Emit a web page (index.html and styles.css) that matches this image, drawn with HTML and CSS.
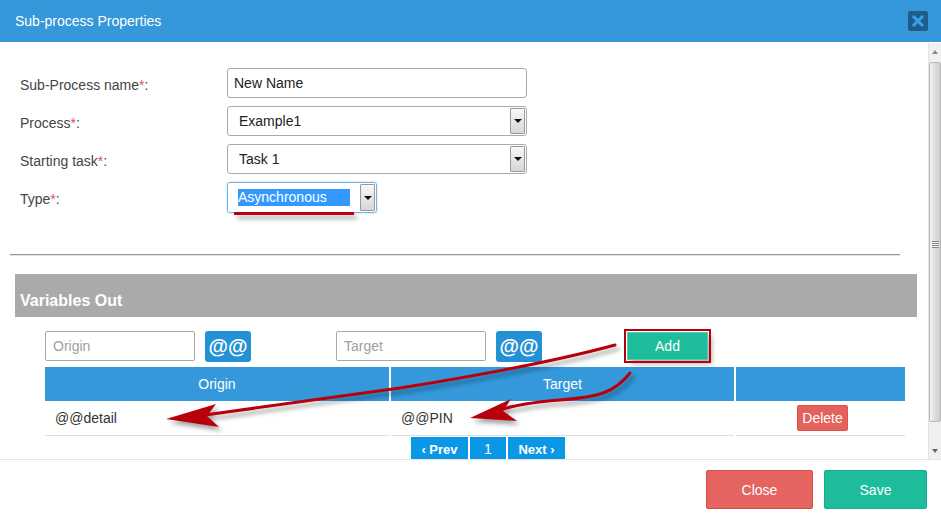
FILE: index.html
```html
<!DOCTYPE html>
<html lang="en">

<head>
    <meta charset="UTF-8">
    <title>Sub-process Properties</title>
    <link rel="stylesheet" href="styles.css">
</head>

<body>

    <div class="modal">
        <div class="modal-header">
            <h4>Sub-process Properties</h4>
            <button class="btn-x" type="button">
                <svg width="20" height="20" viewBox="0 0 20 20">
                    <path d="M6 6 L14 14 M14 6 L6 14" stroke="#3f9fe4" stroke-width="3" stroke-linecap="square" />
                </svg>
            </button>
        </div>

        <div class="modal-main">
            <div class="modal-body">
                <div class="props">
                    <label>Sub-Process name<span class="req">*</span>:</label>
                    <input class="field" type="text" value="New Name">

                    <label>Process<span class="req">*</span>:</label>
                    <div class="select">
                        <span>Example1</span>
                        <span class="select-btn"></span>
                    </div>

                    <label>Starting task<span class="req">*</span>:</label>
                    <div class="select">
                        <span>Task 1</span>
                        <span class="select-btn"></span>
                    </div>

                    <label>Type<span class="req">*</span>:</label>
                    <div class="select select-small focused">
                        <span class="selected">Asynchronous</span>
                        <span class="select-btn"></span>
                    </div>
                </div>

                <hr>

                <div class="panel-title">Variables Out</div>

                <div class="vars">
                    <div class="var-inputs">
                        <input class="field field-small" type="text" placeholder="Origin">
                        <button class="btn-at" type="button">@@</button>
                        <input class="field field-small target" type="text" placeholder="Target">
                        <button class="btn-at" type="button">@@</button>
                        <button class="btn-add" type="button">Add</button>
                    </div>

                    <table class="var-table">
                        <thead>
                            <tr>
                                <th class="col-origin">Origin</th>
                                <th class="col-target">Target</th>
                                <th class="col-action"></th>
                            </tr>
                        </thead>
                        <tbody>
                            <tr>
                                <td>@@detail</td>
                                <td>@@PIN</td>
                                <td class="cell-action"><button class="btn-delete" type="button">Delete</button></td>
                            </tr>
                        </tbody>
                    </table>

                    <div class="pager">
                        <a href="#">&lsaquo; Prev</a>
                        <a href="#" class="page-num">1</a>
                        <a href="#">Next &rsaquo;</a>
                    </div>
                </div>
            </div>

            <!-- fake scrollbar of the old browser -->
            <div class="scrollbar">
                <div class="sb-up"></div>
                <div class="sb-thumb"><span class="sb-grip"></span></div>
                <div class="sb-track"></div>
                <div class="sb-down"></div>
            </div>
        </div>

        <div class="modal-footer">
            <button class="btn btn-close" type="button">Close</button>
            <button class="btn btn-save" type="button">Save</button>
        </div>

        <!-- red hand-drawn annotations -->
        <svg class="annot" width="941" height="519" viewBox="0 0 941 519">
            <rect x="234" y="212" width="120" height="3" fill="#c00008" />
            <path d="M615 345 C560 360 500 372 400 388 C330 398 260 408 205 415" fill="none" stroke="#b8000a" stroke-width="3" stroke-linecap="round" />
            <polygon points="166,419 216,404 207,416 219,427" fill="#b8000a" />
            <path d="M630 373 C615 392 600 397 560 400 C535 402 515 405 500 410" fill="none" stroke="#b8000a" stroke-width="3" stroke-linecap="round" />
            <polygon points="470,418 511,399 503,411 517,421" fill="#b8000a" />
        </svg>
    </div>

</body>

</html>
```

FILE: styles.css
```css
* {
    margin: 0;
    padding: 0;
    box-sizing: border-box;
}

body {
    width: 941px;
    height: 519px;
    overflow: hidden;
    background-color: #fff;
    font-family: "Liberation Sans", Arial, sans-serif;
    font-size: 14px;
    color: #333;
}

.modal {
    position: relative;
    height: 519px;
    display: flex;
    flex-direction: column;
}

/* Header */
.modal-header {
    height: 42px;
    background-color: #3498db;
    display: flex;
    align-items: center;
    justify-content: space-between;
    padding: 0 13px 0 15px;
}

.modal-header h4 {
    font-size: 14px;
    font-weight: normal;
    color: #fff;
}

.btn-x {
    width: 20px;
    height: 20px;
    border: none;
    border-radius: 2px;
    background-color: #1d5c8b;
    display: flex;
}

/* Body with scrollbar */
.modal-main {
    display: flex;
    height: 416px;
    margin-top: 1px;
}

.modal-body {
    flex: 1;
    overflow: hidden;
    padding-top: 25px;
}

.props {
    display: grid;
    grid-template-columns: 207px 300px;
    grid-template-rows: 30px 30px 30px 31px;
    row-gap: 8px;
    align-items: center;
    padding-left: 20px;
}

.props label {
    padding-top: 3px;
    font-size: 14px;
    color: #444;
}

.req {
    color: #e0504a;
}

.field {
    height: 30px;
    border: 1px solid #aaa;
    border-radius: 3px;
    padding: 0 6px;
    font-family: inherit;
    font-size: 14px;
    color: #222;
    outline: none;
}

.field::placeholder {
    color: #a0a0a0;
}

.select {
    position: relative;
    height: 30px;
    border: 1px solid #aaa;
    border-radius: 3px;
    display: flex;
    align-items: center;
    padding-left: 11px;
    color: #222;
}

.select-btn {
    position: absolute;
    top: 1px;
    right: 1px;
    bottom: 1px;
    width: 15px;
    border: 1px solid #999;
    border-radius: 1px;
    background: linear-gradient(#f8f8f8, #d6d6d6);
}

.select-btn::after {
    content: "";
    position: absolute;
    left: 3px;
    top: 50%;
    margin-top: -2px;
    border-left: 4px solid transparent;
    border-right: 4px solid transparent;
    border-top: 4px solid #111;
}

.select-small {
    width: 150px;
    height: 31px;
    padding-left: 10px;
}

.focused {
    border-color: #7fb3e8;
    box-shadow: 0 0 2px rgba(80, 150, 230, 0.6);
}

.selected {
    background-color: #3399ff;
    color: #fff;
    width: 112px;
    line-height: 17px;
}

hr {
    margin: 41px 28px 0 10px;
    border: none;
    border-top: 1px solid #999;
    border-bottom: 1px solid #e2e2e2;
}

.panel-title {
    margin: 18px 11px 0 15px;
    height: 43px;
    background-color: #aaa;
    color: #fff;
    font-size: 16px;
    font-weight: bold;
    display: flex;
    align-items: center;
    padding: 10px 0 0 5px;
}

/* Variables out */
.vars {
    margin: 14px 23px 0 45px;
}

.var-inputs {
    display: flex;
    align-items: flex-start;
}

.field-small {
    width: 150px;
    padding-left: 7px;
    border-radius: 2px;
}

.btn-at {
    width: 46px;
    height: 31px;
    margin-left: 10px;
    border: none;
    border-radius: 3px;
    background-color: #2591d5;
    color: #fff;
    font-family: inherit;
    font-size: 20px;
    font-weight: bold;
}

.target {
    margin-left: 85px;
}

.btn-add {
    width: 81px;
    height: 28px;
    margin: 1px 0 0 85px;
    border: 1px solid #52cdb0;
    background-color: #1dbc9a;
    color: #fff;
    font-family: inherit;
    font-size: 14px;
    outline: 2px solid #b8000a;
    outline-offset: 1px;
    box-shadow: 4px 4px 5px rgba(0, 0, 0, 0.3);
}

.var-table {
    width: 864px;
    margin: 5px -2px 0;
    border-collapse: separate;
    border-spacing: 2px 0;
    table-layout: fixed;
}

.var-table th {
    height: 34px;
    background-color: #3498db;
    color: #fff;
    font-weight: normal;
    font-size: 14px;
}

.col-origin {
    width: 344px;
}

.col-target {
    width: 343px;
}

.var-table td {
    height: 35px;
    padding-left: 10px;
    border-bottom: 1px solid #ddd;
    font-size: 14px;
    color: #333;
}

.var-table td.cell-action {
    padding-left: 0;
    text-align: center;
}

.btn-delete {
    width: 51px;
    height: 26px;
    margin-left: 4px;
    border: 1px solid #d9534f;
    border-radius: 2px;
    background-color: #e5625c;
    color: #fff;
    font-family: inherit;
    font-size: 14px;
}

.pager {
    display: flex;
    gap: 2px;
    margin: 1px 0 0 366px;
}

.pager a {
    height: 24px;
    padding: 5px 0 0;
    width: 57px;
    text-align: center;
    background-color: #0b97e5;
    color: #fff;
    font-size: 13px;
    font-weight: bold;
    text-decoration: none;
}

.pager a.page-num {
    width: 36px;
    padding-top: 4px;
    font-size: 14px;
    font-weight: normal;
}

/* Scrollbar */
.scrollbar {
    width: 13px;
    display: flex;
    flex-direction: column;
    background-color: #f0f0f0;
    border-left: 1px solid #e4e4e4;
}

.sb-up,
.sb-down {
    position: relative;
    height: 17px;
}

.sb-up::after,
.sb-down::after {
    content: "";
    position: absolute;
    left: 3px;
    top: 7px;
    border-left: 3px solid transparent;
    border-right: 3px solid transparent;
}

.sb-up::after {
    border-bottom: 4px solid #888;
}

.sb-down::after {
    border-top: 4px solid #666;
}

.sb-thumb {
    position: relative;
    height: 360px;
    margin: 2px 0 0;
    border: 1px solid #b8b8b8;
    border-radius: 2px;
    background: linear-gradient(90deg, #f2f2f2, #d9d9d9 60%, #cfcfcf);
}

.sb-grip {
    position: absolute;
    left: 2px;
    top: 178px;
    width: 7px;
    height: 7px;
    background: repeating-linear-gradient(#888 0 1px, #eee 1px 2px);
}

.sb-track {
    flex: 1;
}

/* Footer */
.modal-footer {
    flex: 1;
    border-top: 1px solid #e5e5e5;
    display: flex;
    justify-content: flex-end;
    gap: 11px;
    padding: 10px 14px 0 0;
}

.btn {
    height: 39px;
    border-radius: 2px;
    color: #fff;
    font-family: inherit;
    font-size: 14px;
}

.btn-close {
    width: 107px;
    background-color: #e4645f;
    border: 1px solid #df4a40;
}

.btn-save {
    width: 103px;
    background-color: #1dbc9a;
    border: 1px solid #19ab8c;
}

/* Annotations over the screenshot */
.annot {
    position: absolute;
    left: 0;
    top: 0;
    pointer-events: none;
    filter: drop-shadow(3px 4px 2px rgba(0, 0, 0, 0.35));
}
```
